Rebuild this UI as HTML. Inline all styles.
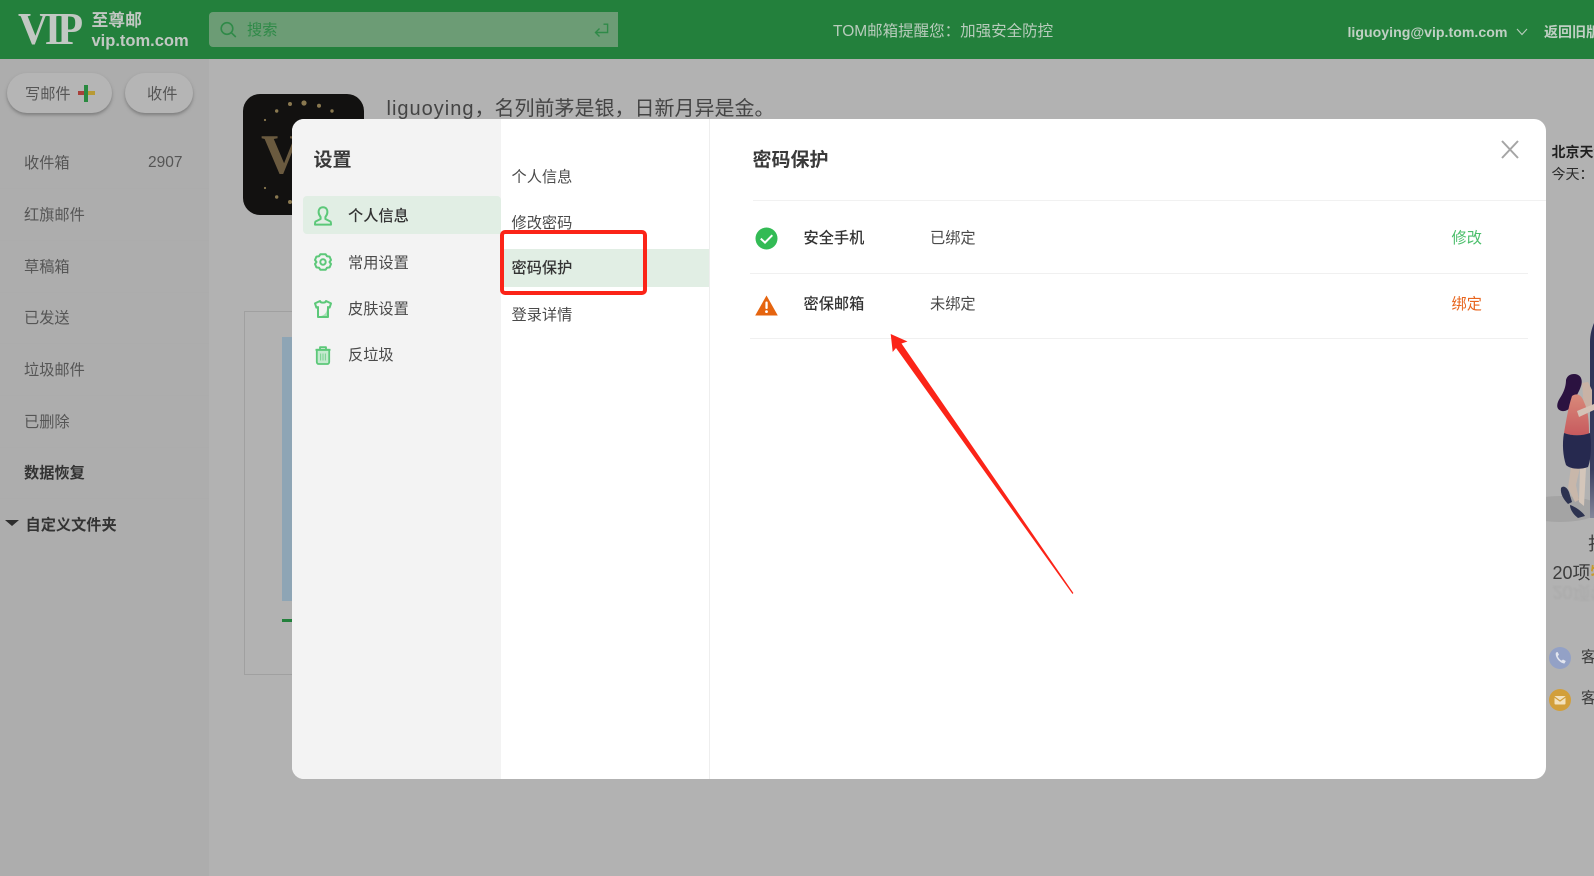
<!DOCTYPE html>
<html lang="zh">
<head>
<meta charset="utf-8">
<title>密码保护</title>
<style>
html,body{margin:0;padding:0;width:1594px;height:876px;overflow:hidden;background:#b2b2b2}
body{position:relative;font-family:"Liberation Sans","Noto Sans CJK SC",sans-serif;font-size:15.2px;color:#444}
.a{position:absolute;white-space:nowrap}
.t{position:absolute;white-space:nowrap;height:24px;line-height:24px}
.b{font-weight:700}
svg{position:absolute;overflow:visible}
.sep{position:absolute;height:1px}
</style>
</head>
<body>
<!-- Header -->
<div class="a" style="left:0;top:0;width:1594px;height:59px;background:#23803c"></div>
<div class="a" style="left:18px;top:3px;font:700 46px/52px 'Liberation Serif',serif;color:#c2c8c3;letter-spacing:-4.2px;transform-origin:0 0;transform:scaleX(.92)">VIP</div>
<div class="t b" style="left:91.5px;top:9px;font-size:16.8px;color:#c2c8c3">至尊邮</div>
<div class="t b" style="left:91.5px;top:29px;font-size:16.5px;color:#c2c8c3">vip.tom.com</div>
<div class="a" style="left:209px;top:12px;width:409px;height:35px;background:#6c9c75;border-radius:4px 0 0 4px"></div>
<svg style="left:219px;top:21px" width="20" height="18" viewBox="0 0 20 18" fill="none" stroke="#2f8a48" stroke-width="1.6"><circle cx="8" cy="7.5" r="5.8"/><path d="M12.2 11.6 L16.8 16"/></svg>
<div class="t" style="left:247px;top:19px;color:#2f8a48">搜索</div>
<svg style="left:594px;top:23px" width="15" height="15" viewBox="0 0 15 15" fill="none" stroke="#2f8a48" stroke-width="1.4"><path d="M9.5 1.2 H13.6 V9.5 H1.5 M5.5 5.5 L1.5 9.5 L5.5 13.5"/></svg>
<div class="t" style="left:833px;top:20px;font-size:15.5px;color:#b8ccbc">TOM邮箱提醒您：加强安全防控</div>
<div class="t b" style="left:1347.5px;top:19.5px;font-size:14.15px;color:#c0d0c4">liguoying@vip.tom.com</div>
<svg style="left:1516px;top:28px" width="12" height="8" viewBox="0 0 12 8" fill="none" stroke="#b8ccbc" stroke-width="1.1"><path d="M1 1 L6 6.5 L11 1"/></svg>
<div class="t b" style="left:1544px;top:19.5px;font-size:14px;color:#c0d0c4;width:50px;overflow:hidden">返回旧版</div>

<!-- Sidebar -->
<div class="a" style="left:0;top:59px;width:209px;height:817px;background:#adadad"></div>
<div class="sep" style="left:0;top:188px;width:209px;background:#acacac"></div>
<div class="sep" style="left:0;top:240px;width:209px;background:#acacac"></div>
<div class="sep" style="left:0;top:292px;width:209px;background:#acacac"></div>
<div class="sep" style="left:0;top:343px;width:209px;background:#acacac"></div>
<div class="sep" style="left:0;top:395px;width:209px;background:#acacac"></div>
<div class="sep" style="left:0;top:447px;width:209px;background:#acacac"></div>
<div class="sep" style="left:0;top:498px;width:209px;background:#acacac"></div>
<div class="a" style="left:7px;top:73px;width:105px;height:40px;border-radius:20px;background:#b5b5b5;box-shadow:0 2px 3px #7d7d7d"></div>
<div class="t" style="left:25px;top:83px;color:#555">写邮件</div>
<div class="a" style="left:78px;top:91px;width:9px;height:4px;background:#a8403a"></div>
<div class="a" style="left:86px;top:91px;width:9px;height:4px;background:#b89a35"></div>
<div class="a" style="left:84px;top:85px;width:4px;height:17px;background:#2a8a40"></div>
<div class="a" style="left:125px;top:73px;width:68px;height:40px;border-radius:20px;background:#b5b5b5;box-shadow:0 2px 3px #7d7d7d"></div>
<div class="t" style="left:147px;top:83px;color:#555">收件</div>

<div class="t" style="left:24px;top:152px;color:#555">收件箱</div>
<div class="t" style="left:148px;top:151px;font-size:15.5px;color:#555">2907</div>
<div class="t" style="left:24px;top:204px;color:#555">红旗邮件</div>
<div class="t" style="left:24px;top:256px;color:#555">草稿箱</div>
<div class="t" style="left:24px;top:307px;color:#555">已发送</div>
<div class="t" style="left:24px;top:359px;color:#555">垃圾邮件</div>
<div class="t" style="left:24px;top:411px;color:#555">已删除</div>
<div class="t b" style="left:24px;top:462px;color:#333">数据恢复</div>
<svg style="left:5px;top:520px" width="14" height="6" viewBox="0 0 14 6"><path d="M0 0 H14 L7 6 Z" fill="#2e2e2e"/></svg>
<div class="t b" style="left:25.5px;top:513.5px;color:#333">自定义文件夹</div>

<!-- Main background content -->
<div class="a" style="left:243px;top:94px;width:121px;height:121px;border-radius:17px;background:#121110"></div>
<div class="a" style="left:261px;top:124px;font:700 56px/62px 'Liberation Serif',serif;color:#6a5a3f">V</div>
<svg style="left:243px;top:94px" width="121" height="121" viewBox="0 0 121 121" fill="#8a7950">
<circle cx="61" cy="9" r="2.6"/><circle cx="47" cy="10" r="2"/><circle cx="76" cy="11.7" r="2"/><circle cx="33.7" cy="17" r="1.7"/><circle cx="89" cy="17" r="1.7"/><circle cx="22" cy="26" r="1.1"/><circle cx="22" cy="94" r="1.1"/><circle cx="33.7" cy="103" r="1.7"/><circle cx="47" cy="108" r="2"/>
</svg>
<div class="t" style="left:386.5px;top:97px;font-size:20px;color:#444"><span style="letter-spacing:1px">liguoying</span>，名列前茅是银，日新月异是金。</div>
<div class="a" style="left:244px;top:311px;width:300px;height:364px;border:1px solid #a0a0a0;box-sizing:border-box"></div>
<div class="a" style="left:282px;top:337px;width:30px;height:264px;background:#8ea5b5"></div>
<div class="a" style="left:282px;top:619px;width:30px;height:3px;background:#23803c"></div>

<!-- Right panel -->
<div class="t b" style="left:1551.5px;top:140px;font-size:14px;color:#1f1f1f">北京天气</div>
<div class="t" style="left:1551.5px;top:162px;font-size:14px;color:#2b2b2b">今天：</div>
<svg style="left:1546px;top:320px" width="48" height="205" viewBox="0 0 48 205">
<defs>
<linearGradient id="col" x1="0" y1="0" x2="0" y2="1"><stop offset="0" stop-color="#2c3054"/><stop offset=".75" stop-color="#3a3e60"/><stop offset="1" stop-color="#85879a"/></linearGradient>
<linearGradient id="shirt" x1="0" y1="0" x2="0" y2="1"><stop offset="0" stop-color="#d98a7a"/><stop offset="1" stop-color="#c75a5e"/></linearGradient>
</defs>
<ellipse cx="14" cy="189" rx="40" ry="13" fill="#a4a4a4"/>
<path d="M48 3 C46 8 44 14 44 22 V198 H48 Z" fill="url(#col)"/>
<path d="M36 63 L42 62 L46 70 V86 L38 88 Z" fill="#c9b2a5"/>
<path d="M28 54 C35 54 37 60 35 66 C33 72 31 74 30 78 C27 86 22 92 16 91 C10 90 10 84 14 78 C18 72 20 66 20 60 C21 56 24 54 28 54 Z" fill="#2b1240"/>
<path d="M26 76 C32 72 36 76 38 82 C42 90 43 100 43 114 C36 116 26 116 18 113 C20 102 22 88 26 76 Z" fill="url(#shirt)"/>
<path d="M31 91 L48 84 V90 L33 97 Z" fill="#d4c2b6"/>
<path d="M25 147 L22 168 L29 182 L33 180 L30 165 L34 148 Z" fill="#c8b7aa"/>
<path d="M34 148 L33 182 L38 186 L40 148 Z" fill="#d4c6ba"/>
<path d="M18 113 C26 116 36 116 44 113 C46 124 45 140 42 147 C34 150 24 149 20 145 C17 136 16 124 18 113 Z" fill="#26294f"/>
<path d="M15 168 C17 165 21 167 23 172 L26 182 L22 184 C18 180 14 174 15 168 Z" fill="#2d3350"/>
<path d="M24 185 C28 186 36 191 39 196 L32 198 C28 195 24 190 24 185 Z" fill="#2d3350"/>
</svg>
<div class="t" style="left:1588px;top:532px;font-size:18px;color:#3c3c3c;width:6px;overflow:hidden">扫码</div>
<div class="t" style="left:1552.5px;top:561px;font-size:18px;color:#3c3c3c;width:42px;overflow:hidden">20项<span style="color:#c79a2e;font-weight:700">特</span></div>
<div class="t" style="left:1552.5px;top:580px;font-size:18px;color:#3c3c3c;opacity:.07;filter:blur(1px);transform:scaleY(-1);width:42px;overflow:hidden">20项特</div>
<svg style="left:1549px;top:647px" width="22" height="22" viewBox="0 0 22 22"><circle cx="11" cy="11" r="11" fill="#93a1c6"/><path d="M7 5.5 C5.5 9 10 16 15.5 16.5 L16.8 14 L14 12.5 L12.6 13.6 C11 13 9 10.5 8.8 9 L10 7.8 L8.6 5 Z" fill="#e3e6ef"/></svg>
<svg style="left:1549px;top:689px" width="22" height="22" viewBox="0 0 22 22"><circle cx="11" cy="11" r="11" fill="#d29f3a"/><rect x="5.5" y="7" width="11" height="8.5" rx="1" fill="#f3e2bd"/><path d="M5.5 8 L11 12 L16.5 8" fill="none" stroke="#d29f3a" stroke-width="1.2"/></svg>
<div class="t" style="left:1581px;top:646px;color:#3c3c3c;width:13px;overflow:hidden">客服</div>
<div class="t" style="left:1581px;top:687px;color:#3c3c3c;width:13px;overflow:hidden">客服</div>

<!-- Modal -->
<div class="a" style="left:292px;top:119px;width:1254px;height:660px;background:#fff;border-radius:12px;overflow:hidden">
  <div class="a" style="left:0;top:0;width:209px;height:660px;background:#f3f3f3"></div>
  <div class="a" style="left:417px;top:0;width:1px;height:660px;background:#eeeeee"></div>
</div>
<!-- Left col -->
<div class="t b" style="left:313.5px;top:149px;font-size:19px;color:#3a3a3a">设置</div>
<div class="a" style="left:303px;top:196px;width:198px;height:38px;background:#e1eee4;border-radius:4px 4px 0 4px"></div>
<svg style="left:314px;top:206px" width="18" height="20" viewBox="0 0 18 20" fill="none" stroke="#5cc879" stroke-width="2" stroke-linejoin="round"><path d="M9 1.2 C5.8 1.2 4.6 3.6 4.6 6 C4.6 8.5 5.8 10 6.6 11 L6.6 13 L1.6 15.5 C1 15.9 1 17 1 18.6 H17 C17 17 17 15.9 16.4 15.5 L11.4 13 L11.4 11 C12.2 10 13.4 8.5 13.4 6 C13.4 3.6 12.2 1.2 9 1.2 Z"/></svg>
<div class="t" style="left:348px;top:205px;color:#333;font-weight:500">个人信息</div>
<svg style="left:314px;top:253px" width="18" height="18" viewBox="0 0 18 18" fill="none" stroke="#5cc879" stroke-width="2" stroke-linejoin="round"><path d="M6.4 1.2 H11.6 L13 3.3 L15.6 3.6 L17 7 L15.5 9 L17 11 L15.6 14.4 L13 14.7 L11.6 16.8 H6.4 L5 14.7 L2.4 14.4 L1 11 L2.5 9 L1 7 L2.4 3.6 L5 3.3 Z"/><circle cx="9" cy="9" r="2.7"/></svg>
<div class="t" style="left:348px;top:252px;color:#4a4a4a">常用设置</div>
<svg style="left:314px;top:300px" width="18" height="18" viewBox="0 0 18 18" fill="none" stroke="#5cc879" stroke-width="2" stroke-linejoin="round"><path d="M6 1 C6.5 3.2 11.5 3.2 12 1 L17 3.4 L15.6 7.6 L14 7 V17 H4 V7 L2.4 7.6 L1 3.4 Z"/><path d="M7 16 C11 15 13 12 13 8 V16 Z" fill="#a9e0b7" stroke="none"/></svg>
<div class="t" style="left:348px;top:298px;color:#4a4a4a">皮肤设置</div>
<svg style="left:314px;top:346px" width="18" height="19" viewBox="0 0 18 19" fill="none" stroke="#5cc879" stroke-width="1.8" stroke-linejoin="round"><path d="M2.8 3.8 H15.2 V16 C15.2 17 14.4 18 13.4 18 H4.6 C3.6 18 2.8 17 2.8 16 Z" fill="#c5ead0"/><path d="M1.5 3.8 H16.5 M6 3.6 V1.2 H12 V3.6"/><path d="M6.6 7.5 V14.5 M9 7.5 V14.5 M11.4 7.5 V14.5" stroke-width="1.1" stroke="#7fd396"/></svg>
<div class="t" style="left:348px;top:344px;color:#4a4a4a">反垃圾</div>

<!-- Mid col -->
<div class="t" style="left:511.5px;top:166px;color:#4a4a4a">个人信息</div>
<div class="t" style="left:511.5px;top:212px;color:#4a4a4a">修改密码</div>
<div class="a" style="left:501px;top:249px;width:208px;height:38px;background:#e1eee4"></div>
<div class="t" style="left:511.5px;top:257px;color:#333;font-weight:500">密码保护</div>
<div class="t" style="left:511.5px;top:304px;color:#4a4a4a">登录详情</div>
<div class="a" style="left:499.5px;top:229.5px;width:147px;height:65px;border:4px solid #fb2418;border-radius:5px;box-sizing:border-box"></div>

<!-- Right col -->
<div class="t b" style="left:752.5px;top:149px;font-size:19px;color:#3a3a3a">密码保护</div>
<div class="sep" style="left:753px;top:200px;width:793px;background:#f1f1f1"></div>
<svg style="left:755px;top:227px" width="23" height="23" viewBox="0 0 23 23"><circle cx="11.5" cy="11.5" r="11" fill="#33bb55"/><path d="M5.8 11.6 L10 15.6 L17.3 8.2" fill="none" stroke="#fff" stroke-width="2"/></svg>
<div class="t" style="left:803.5px;top:227px;color:#333;font-weight:500">安全手机</div>
<div class="t" style="left:930px;top:227px;color:#4a4a4a">已绑定</div>
<div class="t" style="left:1451.5px;top:226.5px;color:#4cbf6c">修改</div>
<div class="sep" style="left:750px;top:273px;width:778px;background:#f0f0f0"></div>
<svg style="left:755px;top:295px" width="23" height="21" viewBox="0 0 23 21"><path d="M11.5 0.5 L22.8 20.5 H0.2 Z" fill="#e5640f"/><rect x="10.4" y="6.5" width="2.3" height="7.5" rx="1" fill="#fff"/><circle cx="11.5" cy="16.6" r="1.4" fill="#fff"/></svg>
<div class="t" style="left:803.5px;top:293px;color:#333;font-weight:500">密保邮箱</div>
<div class="t" style="left:930px;top:293px;color:#4a4a4a">未绑定</div>
<div class="t" style="left:1451.5px;top:292.5px;color:#e8651e">绑定</div>
<div class="sep" style="left:750px;top:338px;width:778px;background:#f0f0f0"></div>
<svg style="left:1501px;top:140px" width="18" height="19" viewBox="0 0 18 19" fill="none" stroke="#a5a5a5" stroke-width="2"><path d="M1 1 L17 18 M17 1 L1 18"/></svg>

<!-- Annotation arrow -->
<svg style="left:0;top:0" width="1594" height="876" viewBox="0 0 1594 876"><path d="M890.7 334 L907.5 341.5 L901.5 343.5 L1073.4 593 L1072.5 594 L896 348 L892.7 352 Z" fill="#fb2418"/></svg>
</body>
</html>
